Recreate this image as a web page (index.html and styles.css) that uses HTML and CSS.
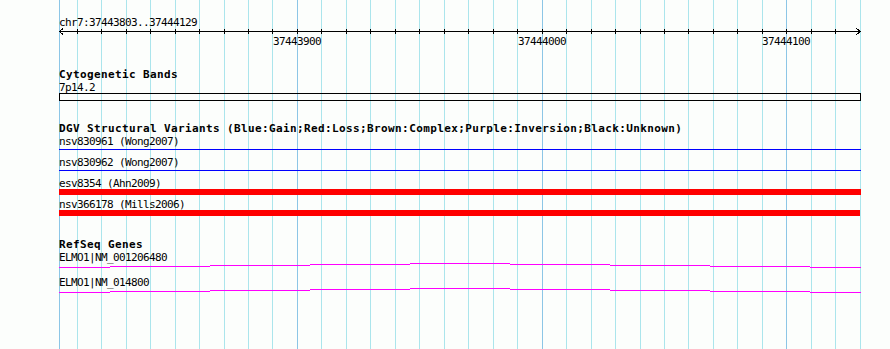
FILE: index.html
```html
<!DOCTYPE html>
<html lang="en">
  <head>
    <meta charset="UTF-8" />
    <meta name="viewport" content="width=device-width, initial-scale=1.0" />
    <title>chr7:37443803..37444129</title>
    <link rel="stylesheet" href="styles.css">
  </head>
  <body>
    <div class="browser">
      <div class="grid" id="grid"></div>

      <!-- Ruler -->
      <div class="overview">
        <div class="segment">chr7:37443803..37444129</div>
        <div class="scale" id="scale">
          <svg class="axis" id="axis" width="802" height="7"></svg>
        </div>
      </div>

      <div class="track track-cyto">
        <div class="track-title">Cytogenetic Bands</div>
        <div class="label">7p14.2</div>
        <div class="band"></div>
      </div>

      <div class="track track-dgv">
        <div class="track-title">DGV Structural Variants (Blue:Gain;Red:Loss;Brown:Complex;Purple:Inversion;Black:Unknown)</div>
        <div class="feature">
          <div class="label">nsv830961 (Wong2007)</div>
          <div class="glyph gain"></div>
        </div>
        <div class="feature">
          <div class="label">nsv830962 (Wong2007)</div>
          <div class="glyph gain"></div>
        </div>
        <div class="feature">
          <div class="label">esv8354 (Ahn2009)</div>
          <div class="glyph loss"></div>
        </div>
        <div class="feature">
          <div class="label">nsv366178 (Mills2006)</div>
          <div class="glyph loss" style="width: 801px"></div>
        </div>
      </div>

      <div class="track track-genes">
        <div class="track-title">RefSeq Genes</div>
        <div class="gene">
          <div class="label">ELMO1|NM_001206480</div>
          <svg class="intron" width="802" height="5"></svg>
        </div>
        <div class="gene">
          <div class="label">ELMO1|NM_014800</div>
          <svg class="intron" width="802" height="5"></svg>
        </div>
      </div>
    </div>

    <script>
      const SVG_NS = "http://www.w3.org/2000/svg";
      const start = 37443803;
      const end = 37444129;
      const scaleX = 2.447;
      const offsetX = 59.6;
      const trackLeft = 59;

      function toX(bp) {
        return Math.round(offsetX + (bp - start) * scaleX);
      }

      function svgEl(name, attrs) {
        const el = document.createElementNS(SVG_NS, name);
        for (const key in attrs) {
          el.setAttribute(key, attrs[key]);
        }
        return el;
      }

      function addGridLine(x, major) {
        const line = document.createElement("div");
        line.className = major ? "grid-line major" : "grid-line";
        line.style.left = x + "px";
        document.getElementById("grid").appendChild(line);
      }

      // Grid lines, ticks and labels every 10bp
      function drawScale() {
        const axis = document.getElementById("axis");
        const scale = document.getElementById("scale");

        axis.appendChild(svgEl("line", { x1: 0, y1: 3.5, x2: 802, y2: 3.5 }));
        axis.appendChild(svgEl("polyline", { points: "4,0.5 0.5,3.5 4,6.5" }));
        axis.appendChild(svgEl("polyline", { points: "797.5,0.5 801.5,3.5 797.5,6.5" }));

        addGridLine(trackLeft, true);

        for (let bp = 37443810; bp <= end + 10; bp += 10) {
          const x = toX(bp);
          const major = bp % 100 === 0;
          addGridLine(x, major);

          if (bp > end) continue;
          const tx = x - trackLeft + 0.5;
          axis.appendChild(svgEl("line", { x1: tx, y1: 1, x2: tx, y2: 6 }));

          if (major) {
            const label = document.createElement("div");
            label.className = "tick-label";
            label.style.left = x - trackLeft + "px";
            label.textContent = bp;
            scale.appendChild(label);
          }
        }
      }

      // Intron "hat": stepped line, 100px per pixel of rise
      function drawIntrons() {
        const steps = [
          [0, 51, 4], [51, 151, 3], [151, 251, 2], [251, 351, 1], [351, 451, 0],
          [451, 551, 1], [551, 651, 2], [651, 751, 3], [751, 802, 4]
        ];
        document.querySelectorAll(".intron").forEach((svg) => {
          steps.forEach((s) => {
            svg.appendChild(
              svgEl("rect", { x: s[0], y: s[2], width: s[1] - s[0], height: 1 })
            );
          });
        });
      }

      drawScale();
      drawIntrons();
    </script>
  </body>
</html>
```

FILE: styles.css
```css
body {
  margin: 0;
  background-color: #fcfefc;
  font-family: "DejaVu Sans Mono", monospace;
  font-size: 11px;
  line-height: 13px;
  letter-spacing: -0.62px;
  color: #000;
}

.browser {
  position: relative;
  z-index: 0;
  width: 890px;
  height: 349px;
  overflow: hidden;
  box-sizing: border-box;
  padding: 15px 0 0 59px;
}

/* Background grid */
.grid {
  position: absolute;
  top: 0;
  left: 0;
  right: 0;
  bottom: 0;
  z-index: -1;
}

.grid-line {
  position: absolute;
  top: 0;
  bottom: 0;
  width: 1px;
  background-color: #abe5ec;
}

.grid-line.major {
  background-color: #8cc6e6;
}

/* Ruler */
.overview,
.track {
  width: 802px;
}

.segment,
.track-title,
.label {
  height: 13px;
  line-height: 15px;
  white-space: nowrap;
}

.scale {
  position: relative;
  height: 39px;
}

.axis {
  display: block;
  shape-rendering: crispEdges;
}

.axis line,
.axis polyline {
  stroke: #000;
  stroke-width: 1;
  fill: none;
}

.tick-label {
  position: absolute;
  top: 6px;
  line-height: 15px;
  transform: translateX(-50%);
  white-space: nowrap;
}

/* Tracks */
.track {
  margin-bottom: 20px;
}

.track-dgv {
  margin-bottom: 19px;
}

.track-title {
  font-weight: bold;
  letter-spacing: 0.38px;
}

.band {
  height: 8px;
  box-sizing: border-box;
  border: 1px solid #000;
}

.feature {
  padding-bottom: 2px;
}

.glyph {
  height: 6px;
}

.glyph.gain {
  height: 1px;
  margin: 2px 0 3px;
  background-color: #0000ff;
}

.glyph.loss {
  background-color: #ff0000;
}

.gene {
  padding-bottom: 7px;
}

.intron {
  display: block;
  shape-rendering: crispEdges;
  fill: #ff00ff;
}
```
